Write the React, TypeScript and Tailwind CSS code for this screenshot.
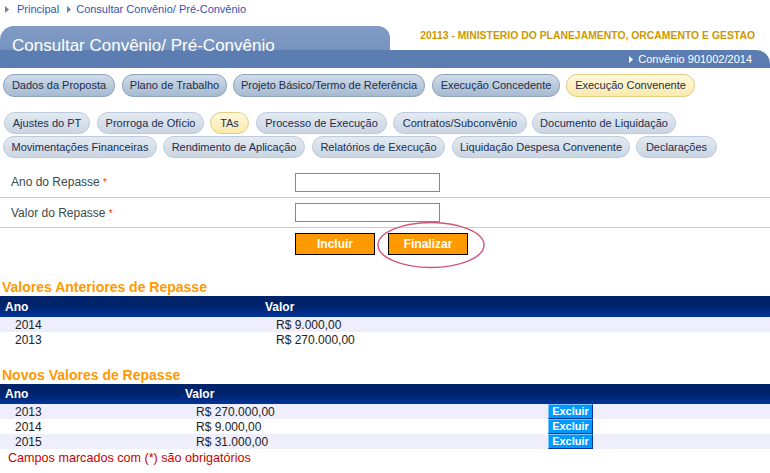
import React from 'react';

const font = { fontFamily: '"Liberation Sans", Arial, sans-serif' };

const tabsMain = [
  { label: 'Dados da Proposta', cls: 'ml-[3px] w-[112px]' },
  { label: 'Plano de Trabalho', cls: 'ml-[7px] w-[105px]' },
  { label: 'Projeto Básico/Termo de Referência', cls: 'ml-[6px] w-[192px]' },
  { label: 'Execução Concedente', cls: 'ml-[7px] w-[128px]' },
  { label: 'Execução Convenente', cls: 'ml-[6px] w-[129px]', active: true },
];

const tabsSub1 = [
  { label: 'Ajustes do PT', cls: 'ml-[4px] w-[86px]' },
  { label: 'Prorroga de Ofício', cls: 'ml-[7px] w-[107px]' },
  { label: 'TAs', cls: 'ml-[6px] w-[39px]', active: true },
  { label: 'Processo de Execução', cls: 'ml-[7px] w-[131px]' },
  { label: 'Contratos/Subconvênio', cls: 'ml-[6px] w-[134px]' },
  { label: 'Documento de Liquidação', cls: 'ml-[5px] w-[144px]' },
];

const tabsSub2 = [
  { label: 'Movimentações Financeiras', cls: 'ml-[3px] w-[154px]' },
  { label: 'Rendimento de Aplicação', cls: 'ml-[6px] w-[142px]' },
  { label: 'Relatórios de Execução', cls: 'ml-[7px] w-[133px]' },
  { label: 'Liquidação Despesa Convenente', cls: 'ml-[7px] w-[178px]' },
  { label: 'Declarações', cls: 'ml-[6px] w-[81px]' },
];

const anteriores = [
  { ano: '2014', valor: 'R$ 9.000,00' },
  { ano: '2013', valor: 'R$ 270.000,00' },
];

const novos = [
  { ano: '2013', valor: 'R$ 270.000,00' },
  { ano: '2014', valor: 'R$ 9.000,00' },
  { ano: '2015', valor: 'R$ 31.000,00' },
];

function Arrow({ color }: { color: string }) {
  return (
    <svg width="4" height="7" viewBox="0 0 4 7" className="shrink-0">
      <path d="M0 0 L4 3.5 L0 7 Z" fill={color} />
    </svg>
  );
}

function Pill({ label, cls, active, sub }: { label: string; cls: string; active?: boolean; sub?: boolean }) {
  const look = active
    ? 'border-[#e3cd84] bg-[linear-gradient(to_bottom,#fef8dc,#fbeaae)]'
    : sub
    ? 'border-[#bccbdb] bg-[linear-gradient(to_bottom,#e3eaf2,#cad6e3)]'
    : 'border-[#8ea3bd] bg-[linear-gradient(to_bottom,#cfdbe8,#a6bad0)]';
  return (
    <div
      className={`${cls} ${look} ${sub ? 'h-[22px]' : 'h-[23px]'} shrink-0 flex items-center justify-center rounded-[11px] border text-[11px] text-[#1c2d4f] whitespace-nowrap`}
    >
      {label}
    </div>
  );
}

function TableHead({ valorCol }: { valorCol: string }) {
  return (
    <div className={`flex ${valorCol === 'a' ? 'h-[21px]' : 'h-[20px]'} items-center bg-[linear-gradient(to_bottom,#00236a_45%,#003399)] text-[12px] font-bold text-white`}>
      <div className={`${valorCol === 'a' ? 'w-[260px]' : 'w-[180px]'} pl-[5px]`}>Ano</div>
      <div className="pl-[5px]">Valor</div>
    </div>
  );
}

export default function App() {
  return (
    <div className="w-[770px] h-[473px] overflow-hidden bg-white" style={font}>
      {/* breadcrumb */}
      <div className="h-[26px] flex items-start pl-[5px] text-[11px] leading-[18px] text-[#3354b4]">
        <div className="flex items-center gap-[8px]">
          <div className="flex items-center gap-[8px]">
            <Arrow color="#6d82a8" />
            <span>Principal</span>
          </div>
          <div className="flex items-center gap-[5px]">
            <Arrow color="#6d82a8" />
            <span>Consultar Convênio/ Pré-Convênio</span>
          </div>
        </div>
      </div>

      {/* header */}
      <div>
        <div className="flex h-[24px]">
          <div className="w-[390px] h-[24px] rounded-tl-[14px] rounded-tr-[12px] bg-[linear-gradient(to_bottom,#819cc5,#7693bf)] overflow-visible">
            <div className="relative z-10 pl-[12px] pt-[9px] text-[17px] leading-[22px] text-white whitespace-nowrap">
              Consultar Convênio/ Pré-Convênio
            </div>
          </div>
          <div className="flex-1 flex justify-end items-end pr-[15px] pb-[6px] text-[10.4px] font-bold text-[#cc9900] whitespace-nowrap">
            20113 - MINISTERIO DO PLANEJAMENTO, ORCAMENTO E GESTAO
          </div>
        </div>
        <div className="h-[18px] rounded-tr-[14px] bg-[#5b7db1] flex items-end justify-end pr-[18px] pb-[1px] text-[11px] leading-[15px] text-white">
          <div className="flex items-center gap-[5px]">
            <Arrow color="#ffffff" />
            <span>Convênio 901002/2014</span>
          </div>
        </div>
      </div>

      {/* main tabs */}
      <div className="mt-[6px] flex">
        {tabsMain.map((t) => (
          <Pill key={t.label} {...t} />
        ))}
      </div>

      {/* sub tabs */}
      <div className="mt-[15px] flex flex-col gap-[2px]">
        <div className="flex">
          {tabsSub1.map((t) => (
            <Pill key={t.label} {...t} sub />
          ))}
        </div>
        <div className="flex">
          {tabsSub2.map((t) => (
            <Pill key={t.label} {...t} sub />
          ))}
        </div>
      </div>

      {/* form */}
      <div className="mt-[9px]">
        <div className="h-[31px] flex items-center border-b border-[#cccccc]">
          <div className="w-[295px] pl-[11px] text-[12px] text-[#3b4a4a]">
            Ano do Repasse <span className="text-[10px] text-[#ff3300]">*</span>
          </div>
          <div className="w-[145px] h-[19px] border border-[#999900] bg-white" />
        </div>
        <div className="h-[30px] flex items-center border-b border-[#cccccc]">
          <div className="w-[295px] pl-[11px] text-[12px] text-[#3b4a4a]">
            Valor do Repasse <span className="text-[10px] text-[#ff3300]">*</span>
          </div>
          <div className="w-[145px] h-[19px] border border-[#999900] bg-white" />
        </div>
        <div className="relative h-[51px] pt-[5px] pl-[295px] flex items-start gap-[13px]">
          <div className="w-[80px] h-[22px] flex items-center justify-center bg-[#ff9900] border border-black text-[12px] font-bold text-white">
            Incluir
          </div>
          <div className="w-[80px] h-[22px] flex items-center justify-center bg-[#ff9900] border border-black text-[12px] font-bold text-white">
            Finalizar
          </div>
          <svg className="absolute left-[376px] top-[-7px]" width="110" height="48" viewBox="0 0 110 48">
            <ellipse cx="55" cy="24" rx="53" ry="22.5" fill="none" stroke="#d4557a" strokeWidth="1.4" />
          </svg>
        </div>
      </div>

      {/* valores anteriores */}
      <div className="pl-[2px] h-[17px] text-[14px] leading-[17px] font-bold text-[#ff9900]">Valores Anteriores de Repasse</div>
      <TableHead valorCol="a" />
      {anteriores.map((r, i) => (
        <div key={r.ano} className={`flex h-[15px] items-center text-[12px] text-[#222222] ${i % 2 === 0 ? 'bg-[#eeeefc]' : 'bg-white'}`}>
          <div className="w-[260px] pl-[15px]">{r.ano}</div>
          <div className="pl-[16px]">{r.valor}</div>
        </div>
      ))}

      {/* novos valores */}
      <div className="mt-[20px] pl-[2px] h-[17px] text-[14px] leading-[17px] font-bold text-[#ff9900]">Novos Valores de Repasse</div>
      <TableHead valorCol="b" />
      {novos.map((r, i) => (
        <div key={r.ano} className={`flex h-[15px] items-center text-[12px] text-[#222222] ${i % 2 === 0 ? 'bg-[#eeeefc]' : 'bg-white'}`}>
          <div className="w-[180px] pl-[15px]">{r.ano}</div>
          <div className="w-[368px] pl-[16px]">{r.valor}</div>
          <div className="w-[45px] h-[15px] flex items-center justify-center bg-[#0099ff] border border-t-[#77c4ff] border-l-[#77c4ff] border-b-[#003399] border-r-[#003399] text-[11px] font-bold text-white">
            Excluir
          </div>
        </div>
      ))}

      <div className="pl-[8px] h-[16px] mt-[1px] text-[12.6px] leading-[16px] text-[#cc0000]">
        Campos marcados com (*) são obrigatórios
      </div>
    </div>
  );
}
